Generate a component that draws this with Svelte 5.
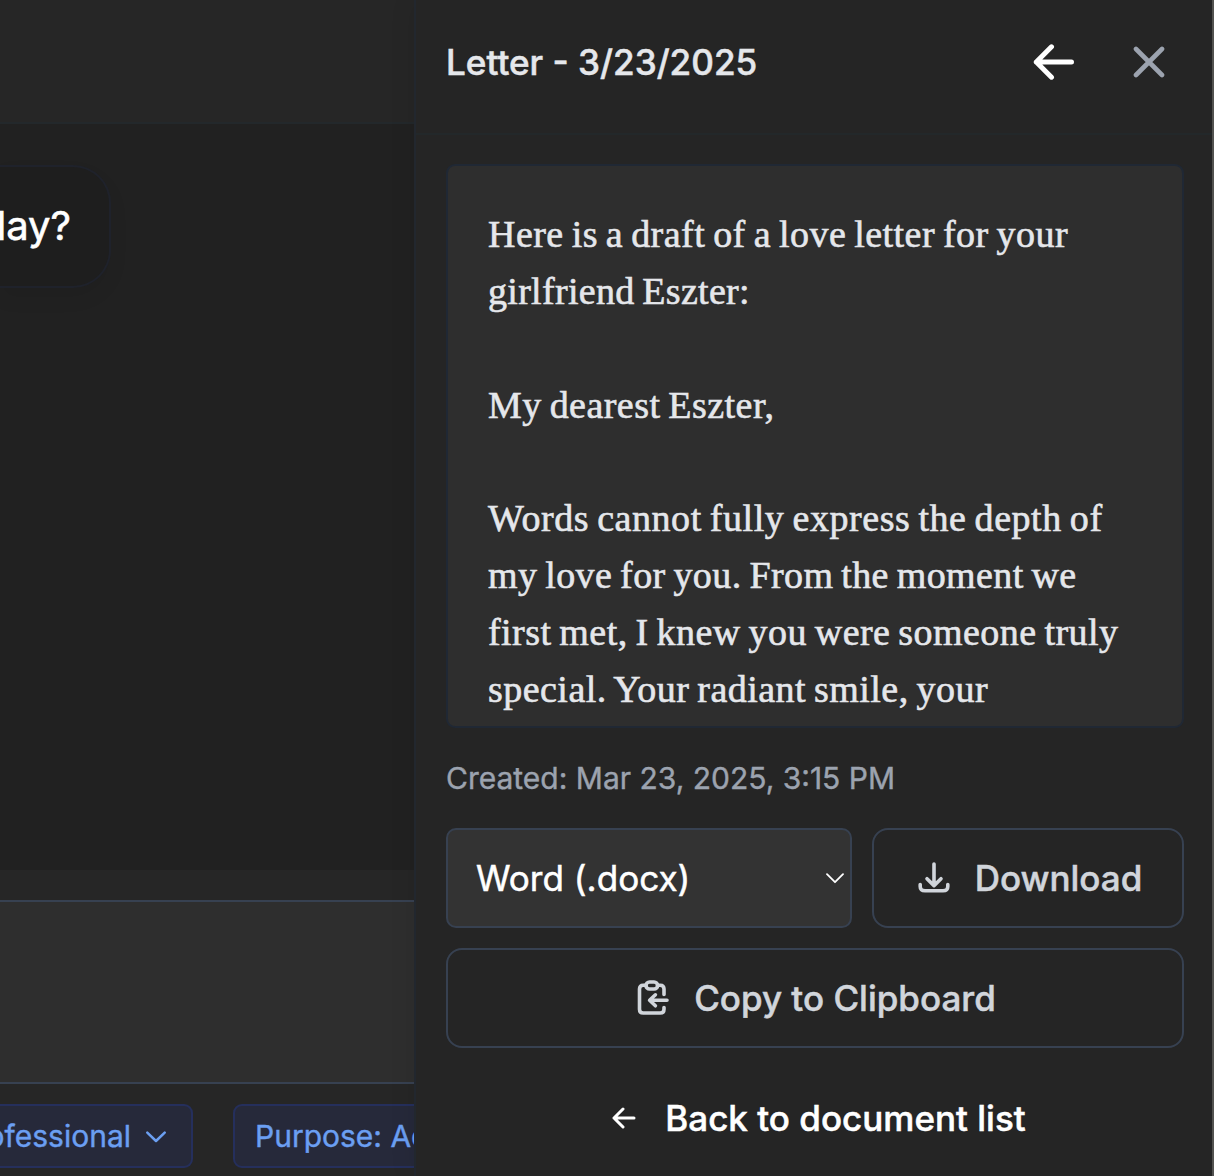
<script>
  const lines = [
    { text: 'Here is a draft of a love letter for your', track: 0.46 },
    { text: 'girlfriend Eszter:', track: 0.3 },
    { text: '', track: 0 },
    { text: 'My dearest Eszter,', track: 0.45 },
    { text: '', track: 0 },
    { text: 'Words cannot fully express the depth of', track: 0.56 },
    { text: 'my love for you. From the moment we', track: 0.39 },
    { text: 'first met, I knew you were someone truly', track: 0.44 },
    { text: 'special. Your radiant smile, your', track: 0.46 }
  ];
</script>

<div class="app">
  <main class="chat">
    <header class="topbar"></header>
    <section class="messages">
      <div class="bubble">How can I help you today?</div>
    </section>
    <footer class="composer">
      <div class="input"></div>
      <div class="chips">
        <button class="chip first"><span>Tone: Professional</span>
          <svg width="20" height="12" viewBox="0 0 20 12"><path d="M1.3 1.6 10 10 18.7 1.6" /></svg>
        </button>
        <button class="chip"><span>Purpose: Academic</span></button>
      </div>
    </footer>
  </main>

  <aside class="panel">
    <header class="head">
      <h2>Letter - 3/23/2025</h2>
      <svg class="back" width="42" height="36" viewBox="0 0 42 36"><path d="M18.5 2.8 3.3 18 18.5 33.2M3.3 18H38.5" /></svg>
      <svg class="close" width="32" height="32" viewBox="0 0 32 32"><path d="M3 3 29 29M29 3 3 29" /></svg>
    </header>
    <div class="body">
      <article class="letter">
        {#each lines as line}
          <p><span style="letter-spacing: {line.track}px">{line.text}</span></p>
        {/each}
      </article>
      <div class="created">Created: Mar 23, 2025, 3:15 PM</div>
      <div class="row">
        <button class="select"><span>Word (.docx)</span>
          <svg width="18" height="11" viewBox="0 0 18 11"><path d="M1 1.2 9 9.2 17 1.2" /></svg>
        </button>
        <button class="btn download">
          <svg width="32" height="32" viewBox="0 0 32 32"><path d="M16 2V23M9 16.7 16 23.6 23 16.7M2.2 22.5V24.5Q2.2 28.8 7 28.8H25Q29.8 28.8 29.8 24.5V22.5" /></svg>
          <span>Download</span>
        </button>
      </div>
      <button class="btn copy">
        <svg width="32" height="36" viewBox="0 0 32 36"><path d="M9 5.2H6.2Q2.5 5.2 2.5 9V29.2Q2.5 33 6.2 33H23.2Q27 33 27 29.2V27.5M20.5 5.2H23.2Q27 5.2 27 9V14.5M30 20.3H13M18.4 14.8 12.6 20.3 18.4 25.8" /><rect x="9" y="2" width="11.6" height="7" rx="3.5" /></svg>
        <span>Copy to Clipboard</span>
      </button>
      <button class="backlink">
        <svg width="24" height="22" viewBox="0 0 24 22"><path d="M11 2 2 11 11 20M2 11H22" /></svg>
        <span>Back to document list</span>
      </button>
    </div>
  </aside>
</div>

<style>
  :global(body) { background: #212121; }
  .app, .app * { box-sizing: border-box; }
  .app {
    display: flex;
    width: 1214px;
    height: 1176px;
    overflow: hidden;
    background: #212121;
    font-family: Inter, sans-serif;
  }
  button { font: inherit; margin: 0; padding: 0; background: none; border: 0; }
  svg { fill: none; stroke: currentColor; stroke-linecap: round; stroke-linejoin: round; flex: none; display: block; }
  span { white-space: pre; }

  .chat { width: 414px; height: 1176px; flex: none; display: flex; flex-direction: column; overflow: hidden; }
  .topbar { height: 124px; flex: none; background: #262626; border-bottom: 2px solid #23282b; }
  .messages { flex: 1; display: flex; align-items: flex-start; padding-top: 41px; }
  .bubble {
    width: 111px;
    height: 123px;
    display: flex;
    align-items: center;
    justify-content: flex-end;
    padding: 0 38px 2px 0;
    font-size: 40px;
    line-height: 60px;
    -webkit-text-stroke: .6px currentColor;
    color: #fff;
    white-space: nowrap;
    background: #1e1e1e;
    border: 2px solid #1f222b;
    border-left: 0;
    border-radius: 0 38px 38px 0;
    box-shadow: 0 10px 20px rgba(0, 0, 0, .06);
    overflow: hidden;
  }
  .composer { height: 306px; flex: none; background: #262626; padding-top: 30px; }
  .input { height: 184px; background: #2e2e2e; border: 2px solid #374151; border-width: 2px 0; }
  .chips { display: flex; gap: 40px; margin-top: 20px; }
  .chip {
    height: 64px;
    flex: none;
    display: flex;
    align-items: center;
    padding: 0 20px;
    color: #6b9ff2;
    font-size: 30px;
    -webkit-text-stroke: .4px currentColor;
    background: #26293a;
    border: 2px solid #252f5c;
    border-radius: 9px;
  }
  .chip.first { width: 193px; justify-content: flex-end; gap: 15px; padding-right: 25px; border-left: 0; border-radius: 0 9px 9px 0; overflow: hidden; }
  .chip svg { stroke-width: 2.5; margin-top: 1px; }

  .panel {
    width: 800px;
    flex: none;
    background: #252525;
    border-left: 2px solid #22272e;
    border-right: 2px solid #525250;
    box-shadow: -2px 0 24px rgba(0, 0, 0, .07);
    position: relative;
  }
  .head {
    height: 135px;
    display: flex;
    align-items: flex-start;
    padding: 0 47px 0 30px;
    border-bottom: 2px solid #23282a;
    color: #e5e7eb;
  }
  h2 { margin: 40px auto 0 0; font-size: 35.1px; line-height: 44px; font-weight: 500; -webkit-text-stroke: .5px currentColor; }
  .back { color: #fff; stroke-width: 5; margin-top: 44px; margin-right: 58px; }
  .close { color: #9ca3af; stroke-width: 4.6; margin-top: 46px; }

  .body { padding: 29px 28px 0 30px; display: flex; flex-direction: column; }
  .letter {
    height: 564px;
    padding: 40px 40px 0;
    background: #2e2e2e;
    border: 2px solid #202834;
    border-radius: 9px;
    overflow: hidden;
    font-family: Georgia, "Liberation Serif", serif;
    font-size: 38px;
    word-spacing: -2px;
    -webkit-text-stroke: .6px currentColor;
    color: #e5e7eb;
  }
  .letter p { margin: 0; height: 56.9px; line-height: 56.9px; white-space: nowrap; }
  .created { margin-top: 28px; height: 44px; line-height: 44px; font-size: 30px; -webkit-text-stroke: .4px currentColor; color: #9ca3af; }
  .row { display: flex; gap: 20px; margin-top: 28px; }
  .select {
    width: 406px;
    height: 100px;
    display: flex;
    align-items: center;
    justify-content: space-between;
    padding: 0 6px 0 28px;
    color: #fff;
    font-size: 35.1px;
    -webkit-text-stroke: .5px currentColor;
    background: #333;
    border: 2px solid #374151;
    border-radius: 10px;
  }
  .select svg { stroke-width: 1.8; }
  .btn {
    height: 100px;
    display: flex;
    align-items: center;
    justify-content: center;
    gap: 25px;
    color: #d1d5db;
    font-size: 35px;
    font-weight: 500;
    -webkit-text-stroke: .5px currentColor;
    border: 2px solid #374151;
    border-radius: 16px;
  }
  .download { flex: 1; padding-left: 4px; }
  .btn svg { stroke-width: 3.6; }
  .copy { margin-top: 20px; padding-left: 3px; }
  .backlink {
    height: 100px;
    margin-top: 20px;
    display: flex;
    align-items: center;
    justify-content: center;
    gap: 29px;
    color: #fff;
    font-size: 35px;
    font-weight: 500;
    -webkit-text-stroke: .5px currentColor;
    padding-left: 8px;
  }
  .backlink svg { stroke-width: 3; }
</style>
